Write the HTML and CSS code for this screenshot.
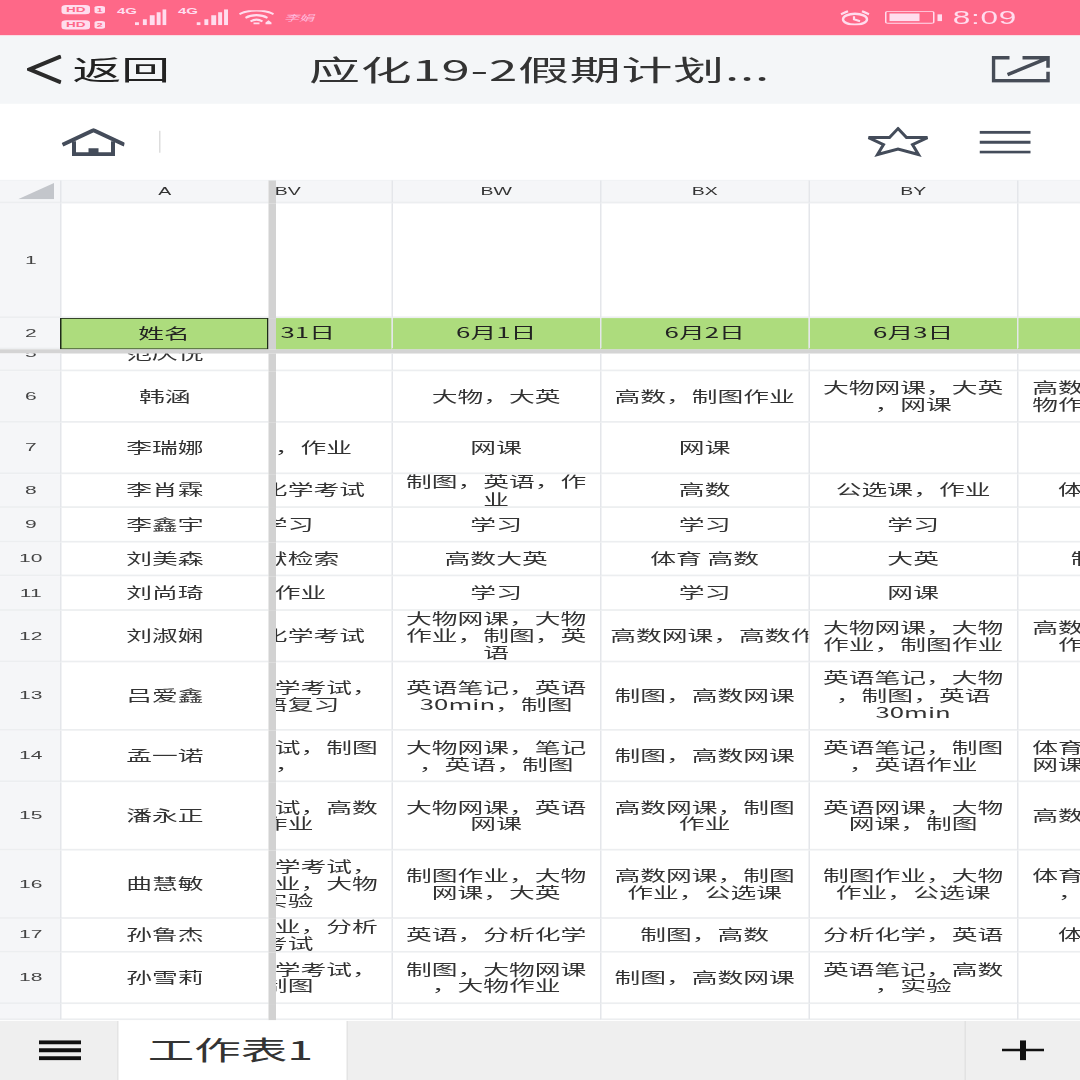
FILE: index.html
```html
<!DOCTYPE html>
<html lang="zh">
<head>
<meta charset="utf-8">
<title>应化19-2假期计划</title>
<link rel="stylesheet" href="styles.css">
</head>
<body>
<div class="stage">
<div class="screen">
  <header class="status">
    <div class="status-left">
      <div class="hd-stack">
        <div class="hd"><span class="hd-box">HD</span><span class="hd-num">1</span></div>
        <div class="hd"><span class="hd-box">HD</span><span class="hd-num">2</span></div>
      </div>
      <div class="signal"><span class="net">4G</span>
        <svg class="bars" viewBox="0 0 32 16" preserveAspectRatio="none"><path d="M0 13h4v3H0zM8 10h4v6H8zM15 6h5v10h-5zM22 3h4v13h-4zM28 0h4v16h-4z"/></svg>
      </div>
      <div class="signal"><span class="net">4G</span>
        <svg class="bars" viewBox="0 0 32 16" preserveAspectRatio="none"><path d="M0 13h4v3H0zM8 10h4v6H8zM15 6h5v10h-5zM22 3h4v13h-4zM28 0h4v16h-4z"/></svg>
      </div>
      <svg class="wifi" viewBox="0 0 36 14" preserveAspectRatio="none"><path d="M1 4C10-1 26-1 35 4M7 7.500C13 4 23 4 29 7.500M12 11C15.500 9 20.500 9 24 11" fill="none" stroke="#fde" stroke-width="2"/><path d="M15 12h6v2h-6zM27 12l3-2 3 2v2h-6z" fill="#fde"/></svg>
      <span class="sign">李娟</span>
    </div>
    <div class="status-right">
      <svg class="alarm" viewBox="0 0 30 15" preserveAspectRatio="none"><ellipse cx="15" cy="9" rx="12" ry="5.500" fill="none" stroke="#fde" stroke-width="2.400"/><path d="M14 6v3l6 2M1 4l7-3M29 4l-7-3" fill="none" stroke="#fde" stroke-width="2.200"/></svg>
      <div class="battery"><div class="battery-body"><div class="battery-fill"></div></div><div class="battery-nub"></div></div>
      <span class="clock">8:09</span>
    </div>
  </header>

  <nav class="titlebar">
    <svg class="back" viewBox="0 0 35 29" preserveAspectRatio="none"><path d="M34 1.500L2.500 14.500L34 27.500" fill="none" stroke="#2b2b2b" stroke-width="4"/></svg>
    <span class="back-text">返回</span>
    <h1 class="doc-title">应化19-2假期计划...</h1>
    <svg class="share" viewBox="0 0 58 27" preserveAspectRatio="none"><path d="M18 2H2v23h54.500V16M31 2h25.500v10M16 19L55 3" fill="none" stroke="#464c57" stroke-width="3.500"/></svg>
  </nav>

  <div class="toolbar">
    <svg class="home" viewBox="0 0 64 28" preserveAspectRatio="none"><path d="M1 16.500L32 2L63 16.500" fill="none" stroke="#444c5a" stroke-width="4"/><path d="M12.500 13v13h39V13" fill="none" stroke="#444c5a" stroke-width="4"/><path d="M27 20h10v7H27z" fill="#444c5a"/></svg>
    <div class="tool-sep"></div>
    <div class="tool-space"></div>
    <svg class="star" viewBox="0 0 66 30" preserveAspectRatio="none"><path d="M32.500 2L41 11H62L47 18L53 28L32.500 22.500L12 28L18 18L3 11H24Z" fill="none" stroke="#444c5a" stroke-width="3"/></svg>
    <svg class="menu" viewBox="0 0 52 23" preserveAspectRatio="none"><path d="M0 1.500h52M0 11.500h52M0 21.500h52" fill="none" stroke="#444c5a" stroke-width="3"/></svg>
  </div>

  <main class="sheet">
    <div class="frozen">
      <div class="row head">
        <div class="num corner"><svg class="tri" viewBox="0 0 36 16" preserveAspectRatio="none"><path d="M0 16L36 0V16Z" fill="#c3c6cb"/></svg></div>
        <div class="cell col">A</div><div class="bar"></div>
        <div class="cell col bv"><span>BV</span></div><div class="cell col">BW</div><div class="cell col">BX</div><div class="cell col">BY</div><div class="cell col"></div>
      </div>
      <div class="row tall">
        <div class="num">1</div><div class="cell"></div><div class="bar"></div>
        <div class="cell"></div><div class="cell"></div><div class="cell"></div><div class="cell"></div><div class="cell"></div>
      </div>
      <div class="row dates">
        <div class="num">2</div><div class="cell green selected">姓名</div><div class="bar"></div>
        <div class="cell green bv"><span>5月31日</span></div><div class="cell green">6月1日</div><div class="cell green">6月2日</div><div class="cell green">6月3日</div><div class="cell green"></div>
      </div>
    </div>
    <div class="freeze-line"></div>
    <div class="rows">
      <div class="row r1 scrolled">
        <div class="num">5</div><div class="cell">范庆悦</div><div class="bar"></div>
        <div class="cell"></div><div class="cell"></div><div class="cell"></div><div class="cell"></div><div class="cell"></div>
      </div>
      <div class="row r2">
        <div class="num">6</div><div class="cell">韩涵</div><div class="bar"></div>
        <div class="cell bv"></div><div class="cell">大物，大英</div><div class="cell">高数，制图作业</div><div class="cell">大物网课，大英<br>，网课</div><div class="cell last"><span>高数作业，大物<br>物作业，制图作</span></div>
      </div>
      <div class="row r2">
        <div class="num">7</div><div class="cell">李瑞娜</div><div class="bar"></div>
        <div class="cell bv"><span>英语，作业</span></div><div class="cell">网课</div><div class="cell">网课</div><div class="cell"></div><div class="cell last"></div>
      </div>
      <div class="row r1">
        <div class="num">8</div><div class="cell">李肖霖</div><div class="bar"></div>
        <div class="cell bv"><span>分析化学考试</span></div><div class="cell">制图，英语，作<br>业</div><div class="cell">高数</div><div class="cell">公选课，作业</div><div class="cell last"><span>体育，作业</span></div>
      </div>
      <div class="row r1">
        <div class="num">9</div><div class="cell">李鑫宇</div><div class="bar"></div>
        <div class="cell bv"><span>学习</span></div><div class="cell">学习</div><div class="cell">学习</div><div class="cell">学习</div><div class="cell last"></div>
      </div>
      <div class="row r1">
        <div class="num">10</div><div class="cell">刘美森</div><div class="bar"></div>
        <div class="cell bv"><span>文献检索</span></div><div class="cell">高数大英</div><div class="cell">体育 高数</div><div class="cell">大英</div><div class="cell last"><span>制图作业</span></div>
      </div>
      <div class="row r1">
        <div class="num">11</div><div class="cell">刘尚琦</div><div class="bar"></div>
        <div class="cell bv"><span>写作业</span></div><div class="cell">学习</div><div class="cell">学习</div><div class="cell">网课</div><div class="cell last"></div>
      </div>
      <div class="row r2">
        <div class="num">12</div><div class="cell">刘淑娴</div><div class="bar"></div>
        <div class="cell bv"><span>分析化学考试</span></div><div class="cell">大物网课，大物<br>作业，制图，英<br>语</div><div class="cell clip">高数网课，高数作业</div><div class="cell">大物网课，大物<br>作业，制图作业</div><div class="cell last"><span>高数网课，高数<br>作业，制图</span></div>
      </div>
      <div class="row r3">
        <div class="num">13</div><div class="cell">吕爱鑫</div><div class="bar"></div>
        <div class="cell bv"><span>分析化学考试，<br>英语复习</span></div><div class="cell">英语笔记，英语<br>30min，制图</div><div class="cell">制图，高数网课</div><div class="cell">英语笔记，大物<br>，制图，英语<br>30min</div><div class="cell last"></div>
      </div>
      <div class="row r2">
        <div class="num">14</div><div class="cell">孟一诺</div><div class="bar"></div>
        <div class="cell bv"><span>化学考试，制图<br>，</span></div><div class="cell">大物网课，笔记<br>，英语，制图</div><div class="cell">制图，高数网课</div><div class="cell">英语笔记，制图<br>，英语作业</div><div class="cell last"><span>体育，高数网课<br>网课，制图作业</span></div>
      </div>
      <div class="row r3">
        <div class="num">15</div><div class="cell">潘永正</div><div class="bar"></div>
        <div class="cell bv"><span>化学考试，高数<br>作业</span></div><div class="cell">大物网课，英语<br>网课</div><div class="cell">高数网课，制图<br>作业</div><div class="cell">英语网课，大物<br>网课，制图</div><div class="cell last"><span>高数网课，制图</span></div>
      </div>
      <div class="row r3">
        <div class="num">16</div><div class="cell">曲慧敏</div><div class="bar"></div>
        <div class="cell bv"><span>分析化学考试，<br>化学作业，大物<br>实验</span></div><div class="cell">制图作业，大物<br>网课，大英</div><div class="cell">高数网课，制图<br>作业，公选课</div><div class="cell">制图作业，大物<br>作业，公选课</div><div class="cell last"><span>体育，高数网课<br>，英语作业</span></div>
      </div>
      <div class="row r1">
        <div class="num">17</div><div class="cell">孙鲁杰</div><div class="bar"></div>
        <div class="cell bv"><span>化学作业，分析<br>考试</span></div><div class="cell">英语，分析化学</div><div class="cell">制图，高数</div><div class="cell">分析化学，英语</div><div class="cell last"><span>体育，作业</span></div>
      </div>
      <div class="row r2">
        <div class="num">18</div><div class="cell">孙雪莉</div><div class="bar"></div>
        <div class="cell bv"><span>分析化学考试，<br>制图</span></div><div class="cell">制图，大物网课<br>，大物作业</div><div class="cell">制图，高数网课</div><div class="cell">英语笔记，高数<br>，实验</div><div class="cell last"></div>
      </div>
      <div class="row tail">
        <div class="num"></div><div class="cell"></div><div class="bar"></div>
        <div class="cell"></div><div class="cell"></div><div class="cell"></div><div class="cell"></div><div class="cell"></div>
      </div>
    </div>
  </main>

  <footer class="tabbar">
    <div class="tab-menu"><svg class="tab-menu-icon" viewBox="0 0 42 20" preserveAspectRatio="none"><path d="M0 2h42M0 10h42M0 18h42" fill="none" stroke="#111" stroke-width="4"/></svg></div>
    <div class="tab">工作表1</div>
    <div class="tab-space"></div>
    <div class="tab-add"><svg class="plus" viewBox="0 0 42 20" preserveAspectRatio="none"><path d="M0 8.500h42V11H0z" fill="#111"/><path d="M18 0h6v20h-6z" fill="#111"/></svg></div>
  </footer>
</div>
</div>
</body>
</html>
```

FILE: styles.css
```css
html, body {
  margin: 0;
  width: 1080px;
  height: 1080px;
  overflow: hidden;
  background: #fff;
}

.stage {
  width: 1080px;
  height: 1080px;
  overflow: hidden;
}

/* The page is laid out at the phone's own 720x1280 size, then stretched to the window. */
.screen {
  width: 720px;
  height: 1280px;
  display: flex;
  flex-direction: column;
  transform: scale(1.5, 0.84375);
  transform-origin: 0 0;
  font-family: "Liberation Sans", "Noto Sans CJK SC", sans-serif;
  color: #333;
  white-space: nowrap;
}

/* status bar */
.status {
  height: 41.5px;
  flex: none;
  background: #fe6888;
  display: flex;
  align-items: center;
  justify-content: space-between;
  color: #fde;
}
.status-left { display: flex; align-items: center; padding-left: 41px; }
.status-right { display: flex; align-items: center; padding-right: 42px; }

.hd-stack { display: flex; flex-direction: column; gap: 6px; width: 37px; }
.hd { display: flex; align-items: center; gap: 3px; height: 12px; }
.hd-box {
  width: 19px;
  height: 11px;
  border-radius: 3px;
  background: #fde;
  color: #fe6888;
  font-size: 9px;
  font-weight: 700;
  line-height: 11px;
  text-align: center;
}
.hd-num {
  width: 7px;
  height: 9px;
  border-radius: 2px;
  background: #fde;
  color: #fe6888;
  font-size: 7px;
  font-weight: 700;
  line-height: 9px;
  text-align: center;
}
.signal { display: flex; align-items: flex-start; width: 40.700px; margin-top: -4px; }
.net { font-size: 10px; font-weight: 700; line-height: 12px; width: 12px; }
.bars { width: 21px; height: 19px; margin-top: 4px; fill: #fde; }
.wifi { width: 24px; height: 17px; }
.sign {
  width: 22px;
  margin-left: 6px;
  font-size: 10px;
  font-style: italic;
  font-family: "Noto Sans CJK SC", sans-serif;
  color: #fbd;
}

.alarm { width: 20px; height: 18px; margin-right: 10px; }
.battery { display: flex; align-items: center; gap: 2px; margin-right: 7px; }
.battery-body {
  width: 33px;
  height: 15px;
  box-sizing: border-box;
  border: 1px solid #fde;
  border-radius: 2px;
  padding: 2px;
}
.battery-fill { width: 75%; height: 100%; background: #fde; }
.battery-nub { width: 3px; height: 8px; background: #fde; }
.clock { font-size: 21px; letter-spacing: 0.5px; }

/* title bar */
.titlebar {
  height: 81.800px;
  flex: none;
  position: relative;
  background: #f4f6f8;
  display: flex;
  align-items: center;
  padding-left: 18px;
  box-sizing: border-box;
}
.back { width: 23.300px; height: 34.400px; flex: none; }
.back-text { margin-left: 7px; margin-bottom: 3px; font-family: "Noto Sans CJK SC", sans-serif; font-size: 32.500px; color: #222; }
.doc-title {
  position: absolute;
  left: 206px;
  top: 50%;
  transform: translateY(-52%);
  margin: 0;
  font-family: "Noto Sans CJK SC", sans-serif;
  font-size: 34px;
  font-weight: 400;
  letter-spacing: 0.5px;
  color: #333;
}
.share { width: 38.700px; height: 32px; margin-left: auto; margin-right: 20.500px; }

/* tool bar */
.toolbar {
  height: 90px;
  flex: none;
  background: #fff;
  display: flex;
  align-items: center;
  padding-left: 40.500px;
  box-sizing: border-box;
}
.home { width: 42.700px; height: 33.200px; flex: none; }
.tool-sep { width: 1px; height: 26px; background: #ddd; margin-left: 23px; }
.tool-space { flex: 1; }
.star { width: 44px; height: 35.500px; margin-right: 32px; margin-top: -1px; }
.menu { width: 34.700px; height: 27.300px; margin-right: 32.700px; }

/* sheet */
.sheet {
  flex: 1;
  min-height: 0;
  display: flex;
  flex-direction: column;
  overflow: hidden;
  background: #fff;
  font-family: "Noto Sans CJK SC", sans-serif;
  font-size: 17.200px;
  line-height: 20.300px;
}
.frozen { flex: none; border-top: 1.500px solid #e1e4e8; }
.rows { flex: 1; min-height: 0; overflow: hidden; }
.freeze-line { height: 5.200px; flex: none; background: #d4d4d4; }

.row {
  display: grid;
  grid-template-columns: 40px 138.800px 5.700px 76.300px 139px 139px 139px 1fr;
}
.head { height: 27px; }
.tall { height: 135.800px; }
.dates { height: 36.700px; }
.r1 { height: 40.500px; }
.r2 { height: 61px; }
.r3 { height: 81px; }
.tail { height: 19px; }
.scrolled { margin-top: -19.500px; }

.num, .cell {
  box-sizing: border-box;
  display: flex;
  align-items: center;
  justify-content: center;
  overflow: hidden;
  min-width: 0;
  text-align: center;
  border-bottom: 2px solid #eceef0;
}
.rows .cell, .rows .num { padding-bottom: 1.200px; }
.num {
  background: #f5f6f8;
  padding-left: 1px;
  font-family: "Liberation Sans", sans-serif;
  font-size: 14px;
  color: #444;
}
.cell { border-left: 1.300px solid #e4e6ea; }
.bar + .cell { border-left: 0; }
.bar { background: #d2d2d2; }

.corner { position: relative; }
.tri { position: absolute; right: 4.500px; bottom: 3px; width: 24px; height: 19px; }
.col {
  background: #f5f6f8;
  font-family: "Liberation Sans", sans-serif;
  font-size: 13px;
  color: #333;
}
.green { background: #addc7d; border-bottom-color: #addc7d; color: #222; }
.selected { border: 1.500px solid #1f2a1a; }

.bv { justify-content: flex-end; }
.bv > span { flex: none; width: 138px; }
.last { justify-content: flex-start; }
.last > span { flex: none; width: 139px; }
.clip { justify-content: flex-start; padding-left: 6px; }

/* tab bar */
.tabbar {
  height: 70px;
  flex: none;
  display: flex;
  background: #efefef;
  box-sizing: border-box;
}
.tab-menu { width: 77.800px; flex: none; display: flex; align-items: center; padding-left: 26px; box-sizing: border-box; }
.tab-menu-icon { width: 28px; height: 23.700px; }
.tab {
  width: 153.800px;
  flex: none;
  padding-bottom: 6px;
  padding-right: 2px;
  background: #fff;
  border-left: 1px solid #e4e4e4;
  border-right: 1px solid #e4e4e4;
  box-sizing: border-box;
  display: flex;
  align-items: center;
  justify-content: center;
  font-family: "Noto Sans CJK SC", sans-serif;
  font-size: 31px;
  color: #333;
}
.tab-space { flex: 1; }
.tab-add {
  width: 76.700px;
  flex: none;
  border-left: 1.500px solid #e2e2e2;
  box-sizing: border-box;
  display: flex;
  align-items: center;
  justify-content: center;
}
.plus { width: 28px; height: 23.700px; }
```
